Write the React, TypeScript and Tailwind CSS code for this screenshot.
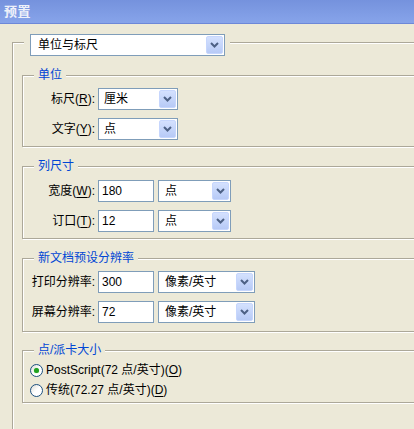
import type { ReactNode } from "react";

const etched = "border border-[#aca899] shadow-[inset_1px_1px_0_#fff,1px_1px_0_#fff]";

function Chevron() {
  return (
    <svg width="9" height="6" viewBox="0 0 9 6">
      <path d="M1 1 L4.5 4.5 L8 1" fill="none" stroke="#4d6185" strokeWidth="2" />
    </svg>
  );
}

function Combo({ value, width, pad = "pl-[5px]" }: { value: string; width: string; pad?: string }) {
  return (
    <div className={`${width} h-[22px] flex items-center bg-white border border-[#7f9db9] ${pad} pr-[1px]`}>
      <span className="flex-1 leading-none">{value}</span>
      <div className="w-[17px] h-[18px] flex items-center justify-center rounded-[2px] border border-[#c6d6fd] bg-gradient-to-b from-[#d4e1fe] to-[#b7caf6]">
        <Chevron />
      </div>
    </div>
  );
}

function Input({ value }: { value: string }) {
  return (
    <div className="w-[56px] h-[22px] flex items-center bg-white border border-[#7f9db9] pl-[3px]">
      {value}
    </div>
  );
}

function Mn({ k }: { k: string }) {
  return <span className="underline underline-offset-2">{k}</span>;
}

function Group({ title, className, children }: { title: string; className: string; children: ReactNode }) {
  return (
    <div className={`${etched} ml-[9px] w-[420px] ${className}`}>
      <div className="-mt-[8px] ml-[11px] h-[14px] leading-[14px] px-[4px] bg-[#ece9d8] text-[#0046d5] w-fit">
        {title}
      </div>
      {children}
    </div>
  );
}

function Row({ label, children }: { label: ReactNode; children: ReactNode }) {
  return (
    <div className="flex items-center h-[22px]">
      <div className="w-[73px] text-right pr-[1px]">{label}</div>
      <div className="flex gap-[4px] ml-[2px]">{children}</div>
    </div>
  );
}

function Radio({ checked, children }: { checked?: boolean; children: ReactNode }) {
  return (
    <div className="flex items-center h-[20px] ml-[7px] gap-[3px]">
      <div className="w-[13px] h-[13px] rounded-full border border-[#1c5180] bg-gradient-to-br from-[#dcdcd5] via-white to-white flex items-center justify-center">
        {checked && <div className="w-[5px] h-[5px] rounded-full bg-[#21a121] shadow-[0_0_1px_#5fd35f]" />}
      </div>
      <span>{children}</span>
    </div>
  );
}

export default function App() {
  return (
    <div className="w-[414px] h-[429px] overflow-hidden bg-[#ece9d8] text-[12px] text-black font-['Liberation_Sans','Noto_Sans_CJK_SC',sans-serif]">
      <div className="h-[24px] bg-gradient-to-b from-[#7592dd] to-[#87a4ea] border-b border-[#6d88d8] flex items-center pl-[4px]">
        <span className="text-[13px] font-bold text-[#eef1fa] tracking-[0.5px]">预置</span>
      </div>

      <div className={`${etched} mt-[18px] ml-[12px] w-[420px] h-[400px]`}>
        <div className="-mt-[9px] ml-[11px] pl-[6px] pr-[5px] bg-[#ece9d8] w-fit">
          <Combo value="单位与标尺" width="w-[195px]" pad="pl-[7px]" />
        </div>

        <Group title="单位" className="mt-[19px] pb-[6px]">
          <div className="pt-[6px] flex flex-col gap-[8px]">
            <Row label={<>标尺(<Mn k="R" />):</>}>
              <Combo value="厘米" width="w-[80px]" />
            </Row>
            <Row label={<>文字(<Mn k="Y" />):</>}>
              <Combo value="点" width="w-[80px]" />
            </Row>
          </div>
        </Group>

        <Group title="列尺寸" className="mt-[19px] pb-[6px]">
          <div className="pt-[7px] flex flex-col gap-[8px]">
            <Row label={<>宽度(<Mn k="W" />):</>}>
              <Input value="180" />
              <Combo value="点" width="w-[73px]" pad="pl-[6px]" />
            </Row>
            <Row label={<>订口(<Mn k="T" />):</>}>
              <Input value="12" />
              <Combo value="点" width="w-[73px]" pad="pl-[6px]" />
            </Row>
          </div>
        </Group>

        <Group title="新文档预设分辨率" className="mt-[19px] pb-[8px]">
          <div className="pt-[6px] flex flex-col gap-[8px]">
            <Row label="打印分辨率:">
              <Input value="300" />
              <Combo value="像素/英寸" width="w-[97px]" pad="pl-[6px]" />
            </Row>
            <Row label="屏幕分辨率:">
              <Input value="72" />
              <Combo value="像素/英寸" width="w-[97px]" pad="pl-[6px]" />
            </Row>
          </div>
        </Group>

        <Group title="点/派卡大小" className="mt-[18px] pb-[2px]">
          <div className="pt-[3px] flex flex-col">
            <Radio checked>
              PostScript(72 点/英寸)(<Mn k="O" />)
            </Radio>
            <Radio>
              传统(72.27 点/英寸)(<Mn k="D" />)
            </Radio>
          </div>
        </Group>
      </div>
    </div>
  );
}
